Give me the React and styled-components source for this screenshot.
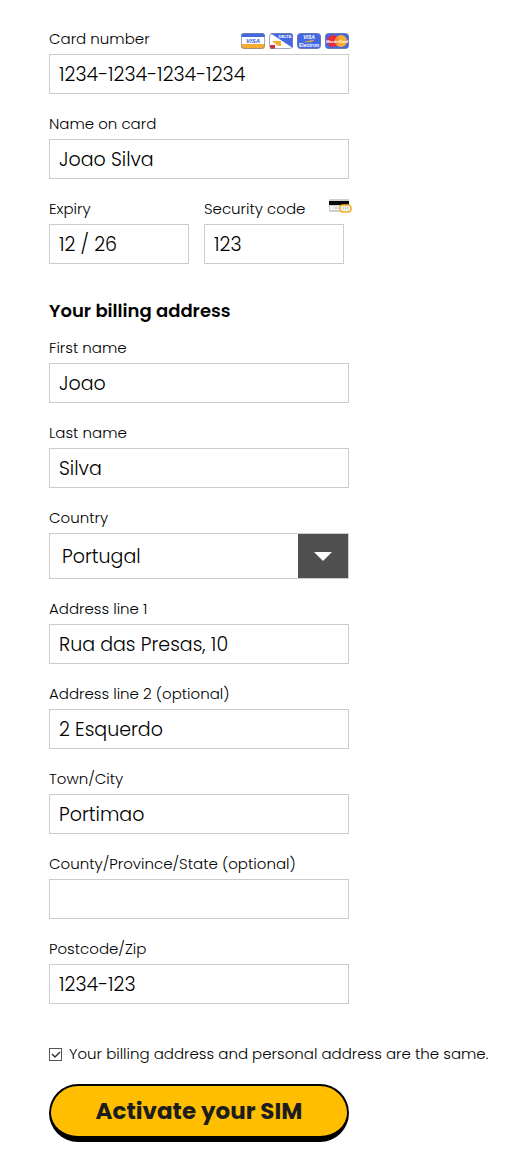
import React, { useState } from 'react';
import styled, { createGlobalStyle } from 'styled-components';

export default function App() {
  const [sameAddress, setSameAddress] = useState(true);

  return (
    <>
      <GlobalStyle />
      <Form onSubmit={(e) => e.preventDefault()}>
        <Fields>
          <Field>
            <LabelRow>
              <Label htmlFor="cardNumber">Card number</Label>
              <CardLogos />
            </LabelRow>
            <Input id="cardNumber" defaultValue="1234-1234-1234-1234" />
          </Field>
          <TextField id="cardName" label="Name on card" value="Joao Silva" />
          <Columns>
            <TextField id="expiry" label="Expiry" value="12 / 26" />
            <Field>
              <LabelRow $overhang>
                <Label htmlFor="securityCode">Security code</Label>
                <SecurityCard />
              </LabelRow>
              <Input id="securityCode" defaultValue="123" />
            </Field>
          </Columns>
        </Fields>

        <Heading>Your billing address</Heading>

        <Fields>
          <TextField id="firstName" label="First name" value="Joao" />
          <TextField id="lastName" label="Last name" value="Silva" />
          <Field>
            <Label htmlFor="country">Country</Label>
            <SelectBox>
              <Select id="country" defaultValue="Portugal">
                <option>Portugal</option>
                <option>Spain</option>
                <option>United Kingdom</option>
              </Select>
              <Arrow>
                <svg width="18" height="10" viewBox="0 0 18 10" aria-hidden="true">
                  <path d="M0 1h18L9 10z" fill="#fff" />
                </svg>
              </Arrow>
            </SelectBox>
          </Field>
          <TextField id="address1" label="Address line 1" value="Rua das Presas, 10" />
          <TextField id="address2" label="Address line 2 (optional)" value="2 Esquerdo" />
          <TextField id="town" label="Town/City" value="Portimao" />
          <TextField id="county" label="County/Province/State (optional)" value="" />
          <TextField id="postcode" label="Postcode/Zip" value="1234-123" />
        </Fields>

        <CheckRow>
          <CheckboxWrap>
            <Checkbox
              id="sameAddress"
              type="checkbox"
              checked={sameAddress}
              onChange={(e) => setSameAddress(e.target.checked)}
            />
            {sameAddress && (
              <Tick width="13" height="13" viewBox="0 0 13 13" aria-hidden="true">
                <path d="M3 6l3 3 5-5" fill="none" stroke="#333" strokeWidth="1.5" />
              </Tick>
            )}
          </CheckboxWrap>
          <Label htmlFor="sameAddress">
            Your billing address and personal address are the same.
          </Label>
        </CheckRow>
        <SubmitButton type="submit">Activate your SIM</SubmitButton>
      </Form>
    </>
  );
}

function TextField({ id, label, value }) {
  return (
    <Field>
      <Label htmlFor={id}>{label}</Label>
      <Input id={id} defaultValue={value} />
    </Field>
  );
}

function CardLogos() {
  return (
    <Logos>
      <svg width="24" height="16" viewBox="0 0 24 16" role="img" aria-label="Visa">
        <clipPath id="visaClip"><rect width="24" height="16" rx="3" /></clipPath>
        <g clipPath="url(#visaClip)">
          <rect width="24" height="16" fill="#fff" />
          <rect width="24" height="4" fill="#4468e4" />
          <rect y="11" width="24" height="5" fill="#f9ac30" />
        </g>
        <rect x=".5" y=".5" width="23" height="15" rx="3" fill="none" stroke="#7b849f" strokeOpacity=".7" />
        <LogoText x="12" y="10" fontSize="6" $italic fill="#3158d8">VISA</LogoText>
      </svg>
      <svg width="24" height="16" viewBox="0 0 24 16" role="img" aria-label="Visa Delta">
        <clipPath id="deltaClip"><rect width="24" height="16" rx="3" /></clipPath>
        <g clipPath="url(#deltaClip)">
          <rect width="24" height="16" fill="#fff" />
          <path d="M1 0h23v15z" fill="#4468e4" />
          <path d="M3 8h9v5H9z" fill="#f9ac30" />
          <path d="M1 12h5v4H1z" fill="#d82b35" />
        </g>
        <rect x=".5" y=".5" width="23" height="15" rx="3" fill="none" stroke="#7b849f" strokeOpacity=".7" />
        <LogoText x="16" y="5" fontSize="4" fill="#fff">DELTA</LogoText>
      </svg>
      <svg width="24" height="16" viewBox="0 0 24 16" role="img" aria-label="Visa Electron">
        <rect x=".5" y=".5" width="23" height="15" rx="3" fill="#4468e4" stroke="#6679b3" />
        <LogoText x="12" y="6" fontSize="5" $italic fill="#fff">VISA</LogoText>
        <path d="M8 9c3-1 6-1 9-2-2 2-5 2-9 2z" fill="#f9ac30" stroke="#f9ac30" strokeWidth=".5" />
        <LogoText x="12" y="14" fontSize="5" fill="#fff">Electron</LogoText>
      </svg>
      <svg width="24" height="16" viewBox="0 0 24 16" role="img" aria-label="MasterCard">
        <rect x=".5" y=".5" width="23" height="15" rx="3" fill="#4468e4" stroke="#6679b3" />
        <circle cx="8" cy="8" r="6" fill="#e52c40" />
        <circle cx="16" cy="8" r="6" fill="#f9ac30" />
        <path d="M12 4v8M10 6h4M10 10h4" stroke="#f07a38" />
        <LogoText x="12" y="10" fontSize="4" $italic fill="#fff">MasterCard</LogoText>
      </svg>
    </Logos>
  );
}

function SecurityCard() {
  return (
    <svg width="23" height="14" viewBox="0 0 23 14" aria-hidden="true">
      <rect width="20" height="13" rx="1" fill="#cfcfcf" />
      <rect y="2" width="20" height="4" fill="#080808" />
      <rect x="1" y="7" width="13" height="4" fill="#f1f1f1" />
      <path d="M6 9h5" stroke="#aaa" strokeDasharray="2 1" />
      <rect x="11" y="6" width="11" height="7" rx="3" fill="#eee" stroke="#f9b126" strokeWidth="1.5" />
      <path d="M14 9h5" stroke="#aaa" strokeDasharray="1 1" />
    </svg>
  );
}

const GlobalStyle = createGlobalStyle`
  *, *::before, *::after {
    box-sizing: border-box;
  }
  body {
    margin: 0;
    background: #fff;
    color: #000;
    font-family: Poppins, Inter, sans-serif;
    font-size: 15px;
    font-weight: 300;
    line-height: 20px;
  }
  input, select, button {
    font: inherit;
    color: inherit;
  }
`;

const Form = styled.form`
  padding: 29px 24px 25px 49px;
`;

const Fields = styled.div`
  display: flex;
  flex-direction: column;
  gap: 20px;
  max-width: 300px;
`;

const Field = styled.div`
  display: flex;
  flex-direction: column;
  gap: 5px;
  min-width: 0;
`;

const Columns = styled.div`
  display: grid;
  grid-template-columns: 1fr 1fr;
  gap: 15px;
  padding-right: 5px;
`;

const LabelRow = styled.div`
  display: flex;
  align-items: ${(props) => (props.$overhang ? 'flex-start' : 'flex-end')};
  justify-content: space-between;
  height: 20px;
  margin-right: ${(props) => (props.$overhang ? '-8px' : '0')};
`;

const Label = styled.label`
  white-space: nowrap;
`;

const Logos = styled.div`
  display: flex;
  gap: 4px;
`;

const LogoText = styled.text`
  font-family: "Liberation Sans", sans-serif;
  font-weight: 700;
  font-style: ${(props) => (props.$italic ? 'italic' : 'normal')};
  text-anchor: middle;
`;

const Input = styled.input`
  width: 100%;
  height: 40px;
  padding: 1px 9px 0;
  border: 1px solid #ccc;
  border-radius: 0;
  background: #fff;
  font-size: 19px;
  line-height: 28px;
  &:focus {
    outline: none;
    border-color: #4f4f4f;
  }
`;

const SelectBox = styled.div`
  display: grid;
  grid-template-columns: 1fr 50px;
  height: 46px;
  border: 1px solid #ccc;
`;

const Select = styled.select`
  grid-area: 1 / 1 / 2 / 3;
  appearance: none;
  padding: 2px 62px 0 12px;
  border: 0;
  border-radius: 0;
  background: transparent;
  font-size: 19px;
  line-height: 28px;
`;

const Arrow = styled.span`
  grid-area: 1 / 2 / 2 / 3;
  display: flex;
  align-items: center;
  justify-content: center;
  background: #4f4f4f;
  pointer-events: none;
`;

const Heading = styled.h2`
  margin: 34px 0 14px;
  font-size: 18px;
  font-weight: 600;
  line-height: 26px;
`;

const CheckRow = styled.div`
  display: flex;
  align-items: center;
  gap: 7px;
  margin: 40px 0 20px;
`;

const CheckboxWrap = styled.span`
  display: grid;
  flex: none;
`;

const Checkbox = styled.input`
  grid-area: 1 / 1;
  appearance: none;
  width: 13px;
  height: 13px;
  margin: 0;
  border: 1px solid #555;
  background: #fff;
`;

const Tick = styled.svg`
  grid-area: 1 / 1;
  pointer-events: none;
`;

const SubmitButton = styled.button`
  width: 100%;
  max-width: 300px;
  height: 58px;
  padding: 0;
  border: 2px solid #000;
  border-bottom-width: 6px;
  border-radius: 29px;
  background: #ffbf00;
  color: #1d1d1d;
  font-size: 23px;
  font-weight: 700;
  cursor: pointer;
`;
